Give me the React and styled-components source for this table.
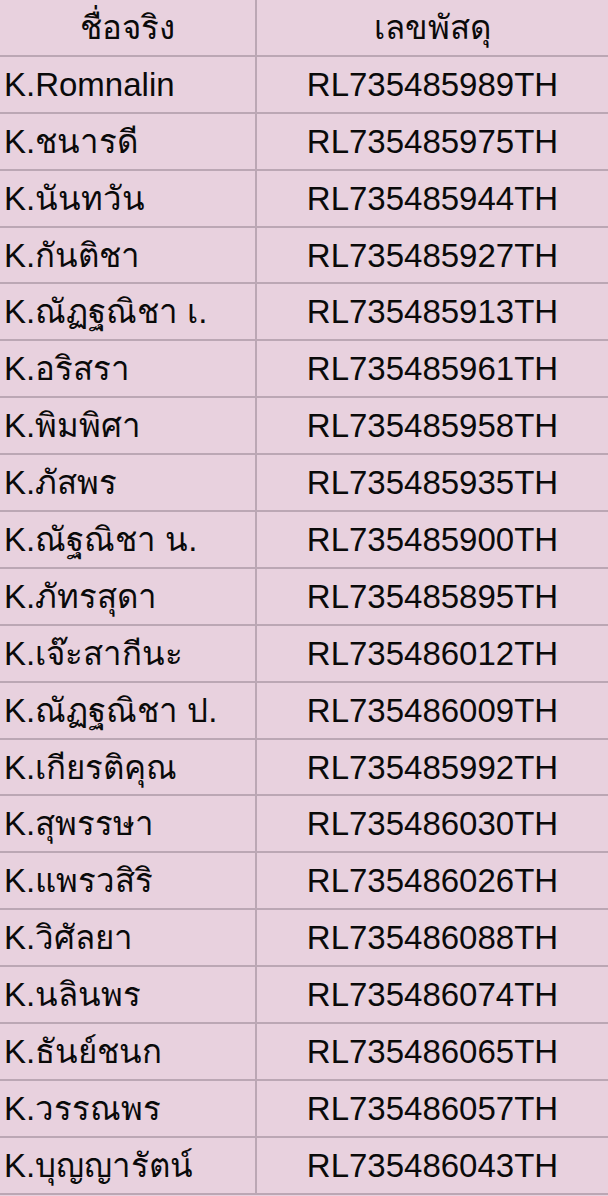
import React from "react";
import styled, { createGlobalStyle } from "styled-components";

const Global = createGlobalStyle`
  html, body { margin: 0; padding: 0; background: #e8d1de; }
  body { font-family: "Liberation Sans", Arial, "Noto Sans", sans-serif; }
`;

const Table = styled.div`
  width: 608px;
  display: grid;
  grid-template-columns: 255px 2px 1fr;
  background: #e8d1de;
  color: #0a0a0a;
  font-size: 33px;
`;

const Cell = styled.div`
  height: 54.9px;
  display: flex;
  align-items: center;
  justify-content: ${(p) => (p.$center ? "center" : "flex-start")};
  padding-left: ${(p) => (p.$center ? "0" : "4px")};
  white-space: nowrap;
  line-height: 1;
`;

const VLine = styled.div`
  background: #bba7b4;
`;

const HLine = styled.div`
  grid-column: 1 / -1;
  height: 2px;
  background: #bba7b4;
`;

const rows = [
  ["K.Romnalin", "RL735485989TH"],
  ["K.ชนารดี", "RL735485975TH"],
  ["K.นันทวัน", "RL735485944TH"],
  ["K.กันติชา", "RL735485927TH"],
  ["K.ณัฏฐณิชา เ.", "RL735485913TH"],
  ["K.อริสรา", "RL735485961TH"],
  ["K.พิมพิศา", "RL735485958TH"],
  ["K.ภัสพร", "RL735485935TH"],
  ["K.ณัฐณิชา น.", "RL735485900TH"],
  ["K.ภัทรสุดา", "RL735485895TH"],
  ["K.เจ๊ะสากีนะ", "RL735486012TH"],
  ["K.ณัฏฐณิชา ป.", "RL735486009TH"],
  ["K.เกียรติคุณ", "RL735485992TH"],
  ["K.สุพรรษา", "RL735486030TH"],
  ["K.แพรวสิริ", "RL735486026TH"],
  ["K.วิศัลยา", "RL735486088TH"],
  ["K.นลินพร", "RL735486074TH"],
  ["K.ธันย์ชนก", "RL735486065TH"],
  ["K.วรรณพร", "RL735486057TH"],
  ["K.บุญญารัตน์", "RL735486043TH"],
];

export default function App() {
  return (
    <>
      <Global />
      <Table>
        <Cell $center>ชื่อจริง</Cell>
        <VLine />
        <Cell $center>เลขพัสดุ</Cell>
        <HLine />
        {rows.map(([name, code]) => (
          <React.Fragment key={code}>
            <Cell>{name}</Cell>
            <VLine />
            <Cell $center>{code}</Cell>
            <HLine />
          </React.Fragment>
        ))}
      </Table>
    </>
  );
}
